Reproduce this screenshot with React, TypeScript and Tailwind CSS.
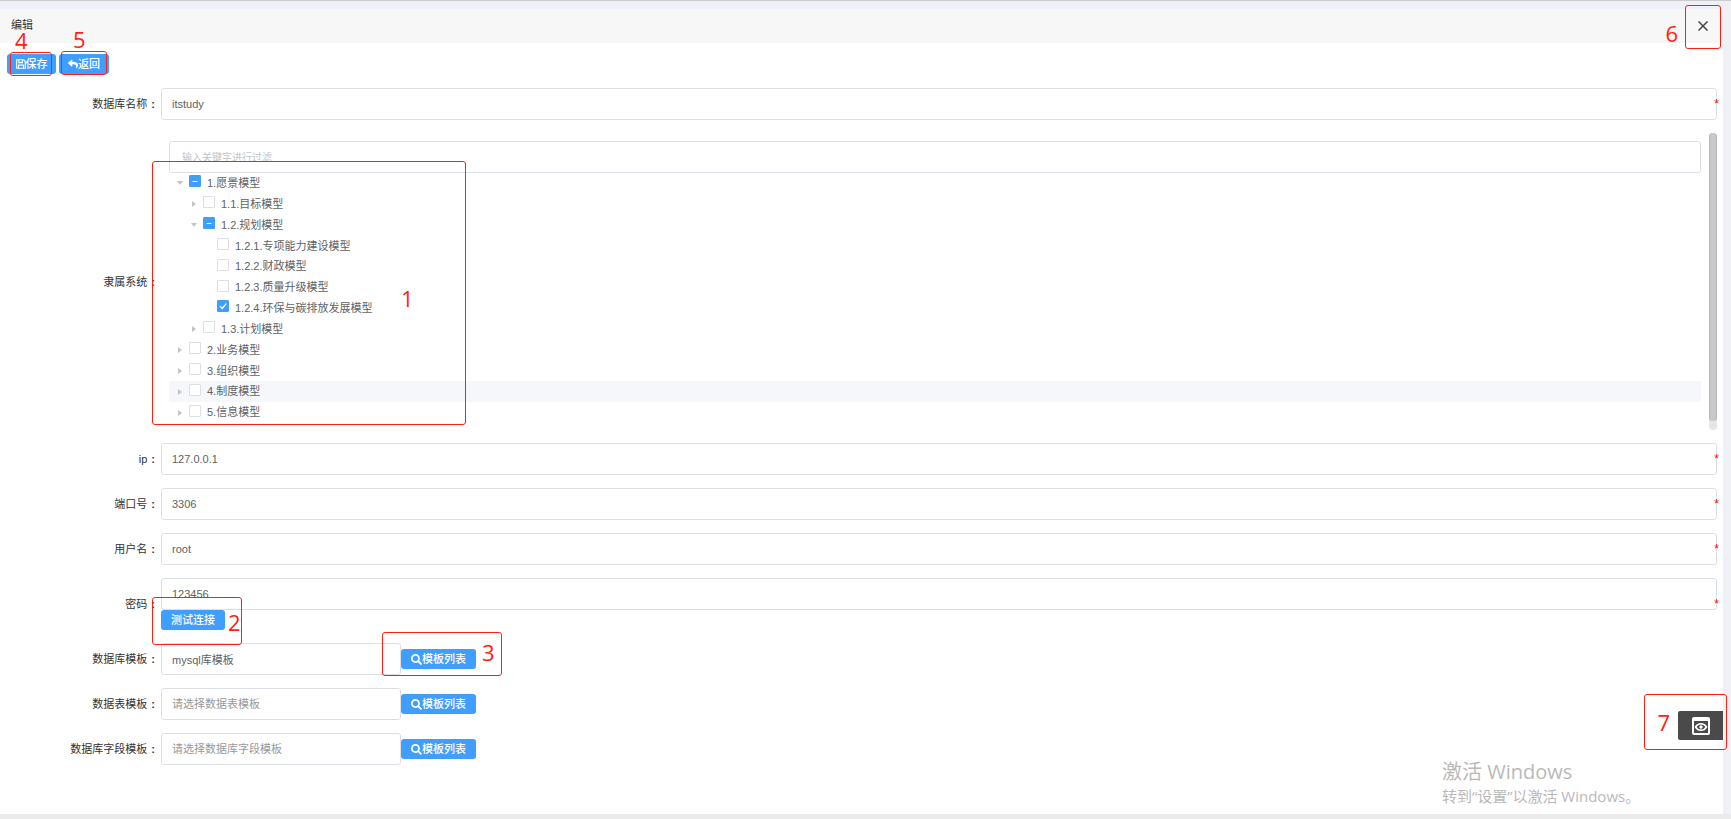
import type { ReactNode } from 'react';
import { clsx } from 'clsx';
import { FaReply, FaSearch } from 'react-icons/fa';

type NodeState = 'checked' | 'partial' | 'none';

interface TreeNode {
  label: string;
  level: number;
  state: NodeState;
  expanded?: boolean;
  leaf?: boolean;
  active?: boolean;
}

const treeNodes: TreeNode[] = [
  { label: '1.愿景模型', level: 0, state: 'partial', expanded: true },
  { label: '1.1.目标模型', level: 1, state: 'none' },
  { label: '1.2.规划模型', level: 1, state: 'partial', expanded: true },
  { label: '1.2.1.专项能力建设模型', level: 2, state: 'none', leaf: true },
  { label: '1.2.2.财政模型', level: 2, state: 'none', leaf: true },
  { label: '1.2.3.质量升级模型', level: 2, state: 'none', leaf: true },
  { label: '1.2.4.环保与碳排放发展模型', level: 2, state: 'checked', leaf: true },
  { label: '1.3.计划模型', level: 1, state: 'none' },
  { label: '2.业务模型', level: 0, state: 'none' },
  { label: '3.组织模型', level: 0, state: 'none' },
  { label: '4.制度模型', level: 0, state: 'none', active: true },
  { label: '5.信息模型', level: 0, state: 'none' },
];

const levelIndent = ['pl-[6px]', 'pl-[20px]', 'pl-[34px]'];

const inputClass =
  'block h-8 rounded-[3px] border border-[#dcdfe6] bg-white px-[10px] text-[11px] text-[#606266] placeholder:text-[#999] outline-none';

function SaveIcon() {
  return (
    <svg viewBox="0 0 14 14" className="size-[10px]" fill="none" stroke="currentColor" strokeWidth="1.6">
      <path d="M1 1h9.5L13 3.5V13H1z" />
      <path d="M4 1v4h5V1M3.5 13V8.5h7V13" />
    </svg>
  );
}

function PreviewIcon() {
  return (
    <svg viewBox="0 0 18 18" className="size-[18px]" fill="none" stroke="currentColor">
      <rect x="1" y="1" width="16" height="16" rx="1" strokeWidth="2" />
      <path d="M1 2.5h16" strokeWidth="3" />
      <path d="M3.5 10C6 5.8 12 5.8 14.5 10 12 14.2 6 14.2 3.5 10z" strokeWidth="1.5" />
      <circle cx="9" cy="10" r="1.7" fill="currentColor" stroke="none" />
    </svg>
  );
}

function PrimaryButton({ children, className }: { children: ReactNode; className?: string }) {
  return (
    <button
      type="button"
      className={clsx(
        'flex h-5 shrink-0 items-center justify-center rounded-[3px] bg-[#409eff] text-[11px] font-medium text-white',
        className,
      )}
    >
      {children}
    </button>
  );
}

function FormRow({ label, htmlFor, children }: { label: string; htmlFor: string; children: ReactNode }) {
  return (
    <div className="flex items-center">
      <label htmlFor={htmlFor} className="w-[161px] shrink-0 pt-px pr-[6px] text-right text-[11px] text-[#333]">
        {label}
        <span className="pl-1 font-bold">:</span>
      </label>
      <div className="relative min-w-0 flex-1">{children}</div>
    </div>
  );
}

function RequiredMark() {
  return <span className="absolute top-1/2 -right-[2px] -translate-y-1/2 text-xs text-[#f00]">*</span>;
}

function TextRow({ id, label, value }: { id: string; label: string; value: string }) {
  return (
    <FormRow label={label} htmlFor={id}>
      <input id={id} type="text" defaultValue={value} className={clsx(inputClass, 'w-full')} />
      <RequiredMark />
    </FormRow>
  );
}

function TemplateRow({ id, label, value, placeholder }: { id: string; label: string; value?: string; placeholder?: string }) {
  return (
    <FormRow label={label} htmlFor={id}>
      <div className="flex items-center">
        <input id={id} type="text" defaultValue={value} placeholder={placeholder} className={clsx(inputClass, 'w-60')} />
        <PrimaryButton className="w-[75px]">
          <FaSearch className="size-[11px]" />
          模板列表
        </PrimaryButton>
      </div>
    </FormRow>
  );
}

function TreeRow({ node, index }: { node: TreeNode; index: number }) {
  const id = `node-${index}`;
  const filled = node.state !== 'none';

  return (
    <li className={clsx('flex flex-1 items-center', levelIndent[node.level], node.active && 'bg-[#f5f7fa]')}>
      <span className="flex w-[14px] shrink-0 items-center pl-[2px] text-[#c0c4cc]">
        {!node.leaf && (
          <svg viewBox="0 0 6 6" className="size-[6px]" fill="currentColor">
            {node.expanded ? <path d="M0 1h6L3 5z" /> : <path d="M1 0v6l4-3z" />}
          </svg>
        )}
      </span>
      <span className="relative mb-1 size-3 shrink-0">
        <input
          id={id}
          type="checkbox"
          defaultChecked={node.state === 'checked'}
          className={clsx(
            'block size-3 appearance-none rounded-[1px] border',
            filled ? 'border-[#409eff] bg-[#409eff]' : 'border-[#dcdfe6] bg-white',
          )}
        />
        {filled && (
          <svg viewBox="0 0 12 12" className="pointer-events-none absolute inset-0 size-3" fill="none" stroke="#fff">
            {node.state === 'checked' ? (
              <path d="M3 6.2l2.2 2.3L9.3 3.5" strokeWidth="1.2" />
            ) : (
              <path d="M3.5 6.5h5" strokeWidth="1" />
            )}
          </svg>
        )}
      </span>
      <label htmlFor={id} className="pl-[6px] text-[11px] whitespace-nowrap text-[#606266]">
        {node.label}
      </label>
    </li>
  );
}

function ModelTree() {
  return (
    <div className="flex h-[297px]">
      <div className="min-w-0 flex-1 p-2">
        <input
          id="tree-filter"
          type="text"
          placeholder="输入关键字进行过滤"
          className="block h-8 w-full rounded-[3px] border border-[#dcdfe6] bg-white px-3 text-[10px] outline-none placeholder:text-[#c0c4cc]"
        />
        <ul className="flex h-[250px] flex-col">
          {treeNodes.map((node, index) => (
            <TreeRow key={node.label} node={node} index={index} />
          ))}
        </ul>
      </div>
      {/* Scrollbar */}
      <div className="w-2 rounded-full bg-[#e6e6e6]">
        <div className="h-[288px] rounded-full border-x border-[#b8b8b8] bg-[#c8c8c8]" />
      </div>
    </div>
  );
}

function Mark({ box, digit, children }: { box: string; digit: string; children: string }) {
  return (
    <>
      <div className={clsx('pointer-events-none absolute rounded-[3px] border border-[#ff1e10]', box)} />
      <span className={clsx("pointer-events-none absolute font-['Open_Sans'] text-[22px] leading-5 text-[#ff1e10]", digit)}>
        {children}
      </span>
    </>
  );
}

function App() {
  return (
    <div className="relative flex min-h-screen flex-col border-t border-[#ccc] bg-[#f0f1f6] pt-2 font-['Liberation_Sans','Noto_Sans_CJK_SC',sans-serif]">
      <main className="mr-2 flex-1 bg-white">
        {/* Header */}
        <header className="flex h-[34px] items-center justify-between bg-[#f7f7f7] pr-[15px] pl-[11px]">
          <h1 className="pb-[2px] text-[11px] text-[#333]">编辑</h1>
          <button type="button" aria-label="关闭" className="text-[#444]">
            <svg viewBox="0 0 10 10" className="size-[10px]" fill="none" stroke="currentColor" strokeWidth="1.5">
              <path d="M.5.5l9 9M9.5.5l-9 9" />
            </svg>
          </button>
        </header>

        <div className="flex gap-[3px] pt-[11px] pl-[7px]">
          <PrimaryButton className="w-[49px]">
            <SaveIcon />
            保存
          </PrimaryButton>
          <PrimaryButton className="w-[50px]">
            <FaReply className="size-[10px]" />
            返回
          </PrimaryButton>
        </div>

        {/* Connection form */}
        <form className="flex flex-col gap-[13px] pt-[14px] pr-[6px]">
          <TextRow id="db-name" label="数据库名称" value="itstudy" />
          <FormRow label="隶属系统" htmlFor="tree-filter">
            <ModelTree />
          </FormRow>
          <TextRow id="ip" label="ip" value="127.0.0.1" />
          <TextRow id="port" label="端口号" value="3306" />
          <TextRow id="user" label="用户名" value="root" />
          <FormRow label="密码" htmlFor="password">
            <input id="password" type="text" defaultValue="123456" className={clsx(inputClass, 'w-full')} />
            <PrimaryButton className="w-16">测试连接</PrimaryButton>
            <RequiredMark />
          </FormRow>
          <TemplateRow id="db-template" label="数据库模板" value="mysql库模板" />
          <TemplateRow id="table-template" label="数据表模板" placeholder="请选择数据表模板" />
          <TemplateRow id="field-template" label="数据库字段模板" placeholder="请选择数据库字段模板" />
        </form>
      </main>
      <footer className="h-[5px] bg-[#ebebeb]" />

      <button
        type="button"
        aria-label="预览"
        className="absolute right-2 bottom-[79px] flex h-[29px] w-[45px] items-center justify-center rounded-l-[2px] bg-[#4a4a4a] text-white"
      >
        <PreviewIcon />
      </button>

      <div className="pointer-events-none absolute right-[88px] bottom-[13px] w-[201px] font-['Open_Sans','Noto_Sans_CJK_SC',sans-serif] whitespace-nowrap text-[#b9b9b9]">
        <p className="text-xl leading-7">激活 Windows</p>
        <p className="text-[15px] leading-5">转到“设置”以激活 Windows。</p>
      </div>

      {/* Numbered callouts */}
      <Mark box="top-[160px] left-[152px] h-[264px] w-[314px]" digit="top-[287px] left-[401px]">1</Mark>
      <Mark box="top-[596px] left-[152px] h-[48px] w-[90px]" digit="top-[611px] left-[228px]">2</Mark>
      <Mark box="top-[631px] left-[382px] h-[44px] w-[120px]" digit="top-[641px] left-[482px]">3</Mark>
      <Mark box="top-[51px] left-[10px] h-[24px] w-[42px]" digit="top-[29px] left-[15px]">4</Mark>
      <Mark box="top-[50px] left-[61px] h-[24px] w-[46px]" digit="top-[28px] left-[73px]">5</Mark>
      <Mark box="top-[4px] right-[10px] h-[44px] w-[36px]" digit="top-[22px] right-[53px]">6</Mark>
      <Mark box="top-[693px] right-[4px] h-[56px] w-[83px]" digit="top-[711px] right-[61px]">7</Mark>
    </div>
  );
}

export default App;
